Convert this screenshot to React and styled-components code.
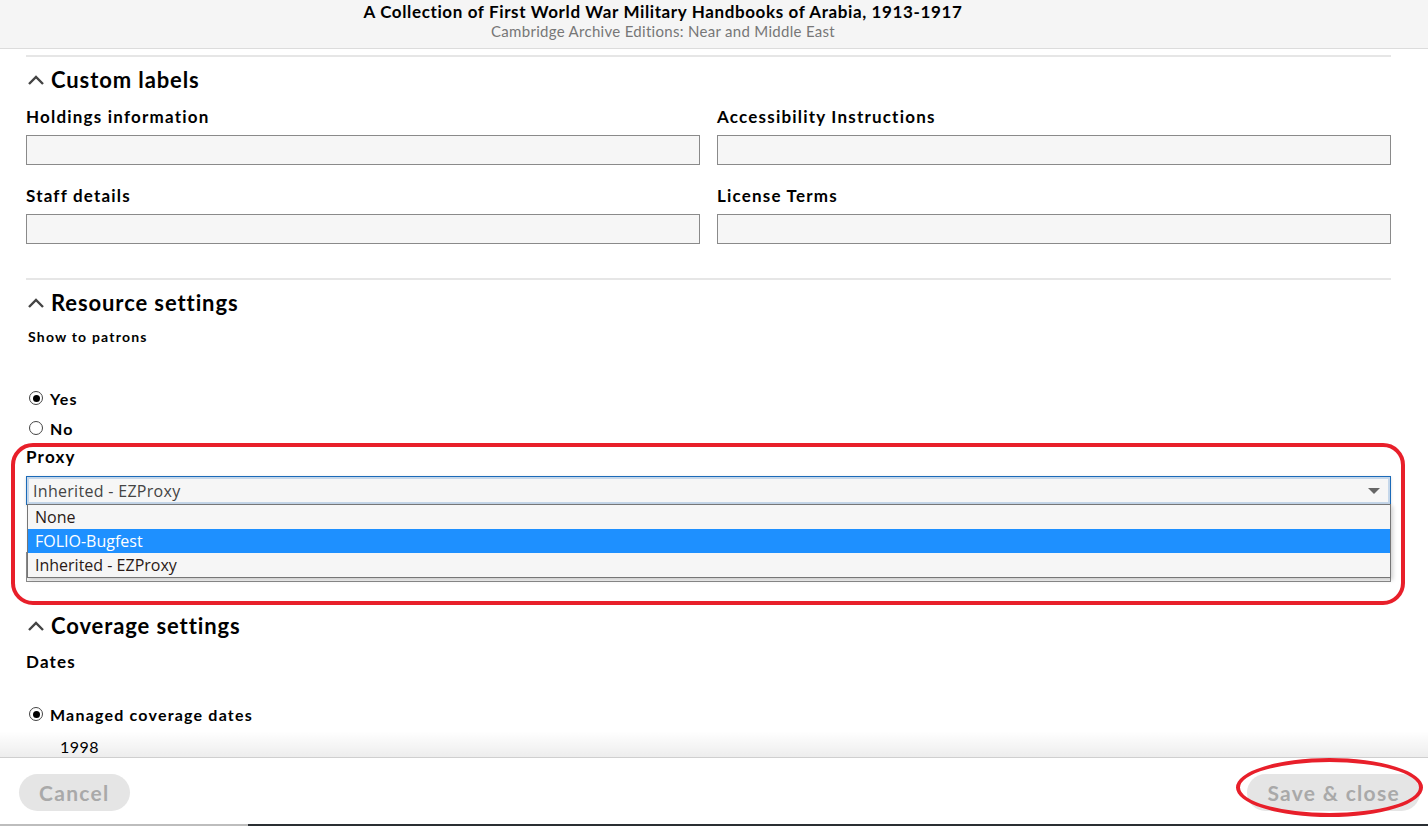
import React from "react";
import styled, { createGlobalStyle } from "styled-components";

const GlobalStyle = createGlobalStyle`
    html, body {
        margin: 0;
        padding: 0;
        background: #fff;
        font-family: Lato, "Noto Sans", sans-serif;
        color: #000;
    }
    * {
        box-sizing: border-box;
    }
`;

const Shell = styled.div`
    width: 1428px;
    height: 826px;
    display: flex;
    flex-direction: column;
    overflow: hidden;
`;

const Header = styled.header`
    height: 49px;
    flex: none;
    background: #f5f5f5;
    border-bottom: 1px solid #dcdcdc;
    display: flex;
    flex-direction: column;
    align-items: center;
    padding: 2px 102px 0 0;
`;

const Title = styled.h1`
    margin: 0;
    font-size: 17px;
    line-height: 20px;
    font-weight: 700;
    letter-spacing: 0.62px;
`;

const Subtitle = styled.div`
    font-size: 15px;
    line-height: 18px;
    letter-spacing: 0.3px;
    color: #777;
`;

const Body = styled.main`
    flex: 1;
    position: relative;
    overflow: hidden;
    padding: 6px 37px 0 26px;

    &::after {
        content: "";
        position: absolute;
        left: 0;
        right: 0;
        bottom: 0;
        height: 26px;
        background: linear-gradient(rgba(0, 0, 0, 0), rgba(0, 0, 0, 0.07));
        pointer-events: none;
    }
`;

const Rule = styled.hr`
    margin: 0 0 ${(p) => p.$after || 8}px;
    border: 0;
    border-top: 2px solid #e6e6e6;
`;

const Section = styled.section`
    margin-bottom: ${(p) => p.$after || 0}px;
`;

const SectionHead = styled.h2`
    margin: 0 0 ${(p) => p.$after || 12}px;
    display: flex;
    align-items: center;
    gap: 6px;
    font-size: 22px;
    line-height: 30px;
    font-weight: 700;
    letter-spacing: 0.9px;
    padding-left: 1px;

    svg {
        flex: none;
    }
`;

const Grid = styled.div`
    display: grid;
    grid-template-columns: 1fr 1fr;
    column-gap: 17px;
    row-gap: 21px;
`;

const Field = styled.div`
    display: flex;
    flex-direction: column;
    gap: 8px;
`;

const Label = styled.div`
    font-size: ${(p) => (p.$small ? 14 : 17)}px;
    line-height: 20px;
    font-weight: 700;
    letter-spacing: 1.2px;
    padding-left: ${(p) => (p.$small ? 2 : 0)}px;
`;

const TextInput = styled.div`
    height: 30px;
    background: #f6f6f6;
    border: 1px solid #8a8a8a;
`;

const RadioGroup = styled.div`
    display: flex;
    flex-direction: column;
    gap: 10px;
    margin: ${(p) => p.$top || 41}px 0 ${(p) => p.$after || 9}px;
`;

const RadioRow = styled.label`
    display: flex;
    align-items: center;
    gap: 7px;
    height: 20px;
    padding-left: 3px;
    font-size: 16px;
    font-weight: 700;
    letter-spacing: 1.2px;
`;

const RadioDot = styled.span`
    width: 14px;
    height: 14px;
    border-radius: 50%;
    border: 1px solid #444;
    background: #fff;
    display: flex;
    align-items: center;
    justify-content: center;

    &::after {
        content: "";
        width: 7px;
        height: 7px;
        border-radius: 50%;
        background: ${(p) => (p.$checked ? "#000" : "transparent")};
    }
`;

const ProxyBlock = styled.div`
    position: relative;
    display: flex;
    flex-direction: column;
    gap: 9px;
    margin-bottom: 29px;
`;

const Select = styled.div`
    position: relative;
    height: 29px;
    background: #f6f6f6;
    border: 1px solid #1b6ab8;
    box-shadow: inset 0 0 0 2px #c5d7ea, 0 1px 3px rgba(0, 0, 0, 0.15);
    display: flex;
    align-items: center;
    padding: 0 8px 0 6px;
    font-family: "Open Sans", "Noto Sans", sans-serif;
    font-size: 16px;
    letter-spacing: 0.3px;
    color: #444;
    z-index: 1;
`;

const Caret = styled.span`
    margin-left: auto;
    margin-right: 2px;
    width: 0;
    height: 0;
    border-left: 6px solid transparent;
    border-right: 6px solid transparent;
    border-top: 6px solid #666;
`;

const UnderField = styled.div`
    height: 30px;
    margin-top: 38px;
    background: #f6f6f6;
    border: 1px solid #8a8a8a;
`;

const Options = styled.ul`
    position: absolute;
    top: 57px;
    left: 1px;
    right: 0;
    margin: 0;
    padding: 0;
    list-style: none;
    background: #f6f6f6;
    border: 1px solid #767676;
    box-shadow: 2px 2px 4px rgba(0, 0, 0, 0.18);
    font-family: "Open Sans", "Noto Sans", sans-serif;
    font-size: 16px;
    z-index: 2;
`;

const Option = styled.li`
    height: 24px;
    line-height: 24px;
    padding-left: 7px;
    color: ${(p) => (p.$active ? "#fff" : "#2a1a16")};
    background: ${(p) => (p.$active ? "#1e90ff" : "transparent")};
`;

const Year = styled.div`
    margin-left: 34px;
    margin-top: 12px;
    font-size: 16px;
    line-height: 22px;
    letter-spacing: 0.5px;
`;

/* annotation marks drawn over the form */
const Ring = styled.div`
    position: absolute;
    left: -15px;
    top: -4px;
    width: 1394px;
    height: 162px;
    border: 4px solid #e81f2a;
    border-radius: 22px;
    pointer-events: none;
    z-index: 3;
`;

const Oval = styled.div`
    position: absolute;
    right: 5px;
    top: 0px;
    width: 187px;
    height: 59px;
    border: 4px solid #e81f2a;
    border-radius: 50%;
    pointer-events: none;
`;

const Footer = styled.footer`
    position: relative;
    flex: none;
    height: 67px;
    border-top: 1px solid #cfcfcf;
    background: #fff;
    display: flex;
    justify-content: space-between;
    align-items: flex-start;
    padding: 16px 8px 0 19px;
`;

const Button = styled.button`
    height: 37px;
    padding: 0 20px;
    border: 0;
    border-radius: 19px;
    background: #e5e5e5;
    color: #a9a9a9;
    font-family: Lato, "Noto Sans", sans-serif;
    font-size: 21px;
    font-weight: 700;
    letter-spacing: 1.3px;
`;

const BottomBar = styled.div`
    flex: none;
    height: 2px;
    background: linear-gradient(90deg, #bdbdbd 0 248px, #2a2f33 248px);
`;

const Chevron = () => (
    <svg width="18" height="12" viewBox="0 0 18 12">
        <path d="M2 10 L9 3 L16 10" fill="none" stroke="#444" strokeWidth="2.4" />
    </svg>
);

const Radio = ({ checked, children }) => (
    <RadioRow>
        <RadioDot $checked={checked} />
        {children}
    </RadioRow>
);

const App = () => (
    <>
        <GlobalStyle />
        <Shell>
            <Header>
                <Title>A Collection of First World War Military Handbooks of Arabia, 1913-1917</Title>
                <Subtitle>Cambridge Archive Editions: Near and Middle East</Subtitle>
            </Header>
            <Body>
                <Rule />
                <Section $after={34}>
                    <SectionHead>
                        <Chevron />
                        Custom labels
                    </SectionHead>
                    <Grid>
                        <Field>
                            <Label>Holdings information</Label>
                            <TextInput />
                        </Field>
                        <Field>
                            <Label>Accessibility Instructions</Label>
                            <TextInput />
                        </Field>
                        <Field>
                            <Label>Staff details</Label>
                            <TextInput />
                        </Field>
                        <Field>
                            <Label>License Terms</Label>
                            <TextInput />
                        </Field>
                    </Grid>
                </Section>
                <Rule $after={8} />
                <Section>
                    <SectionHead $after={9}>
                        <Chevron />
                        Resource settings
                    </SectionHead>
                    <Label $small>Show to patrons</Label>
                    <RadioGroup>
                        <Radio checked>Yes</Radio>
                        <Radio>No</Radio>
                    </RadioGroup>
                    <ProxyBlock>
                        <Ring />
                        <Label>Proxy</Label>
                        <Select>
                            Inherited - EZProxy
                            <Caret />
                        </Select>
                        <Options>
                            <Option>None</Option>
                            <Option $active>FOLIO-Bugfest</Option>
                            <Option>Inherited - EZProxy</Option>
                        </Options>
                        <UnderField />
                    </ProxyBlock>
                </Section>
                <Section>
                    <SectionHead $after={11}>
                        <Chevron />
                        Coverage settings
                    </SectionHead>
                    <Label>Dates</Label>
                    <RadioGroup $top={32} $after={0}>
                        <Radio checked>Managed coverage dates</Radio>
                    </RadioGroup>
                    <Year>1998</Year>
                </Section>
            </Body>
            <Footer>
                <Button>Cancel</Button>
                <Button>Save &amp; close</Button>
                <Oval />
            </Footer>
            <BottomBar />
        </Shell>
    </>
);

export default App;
